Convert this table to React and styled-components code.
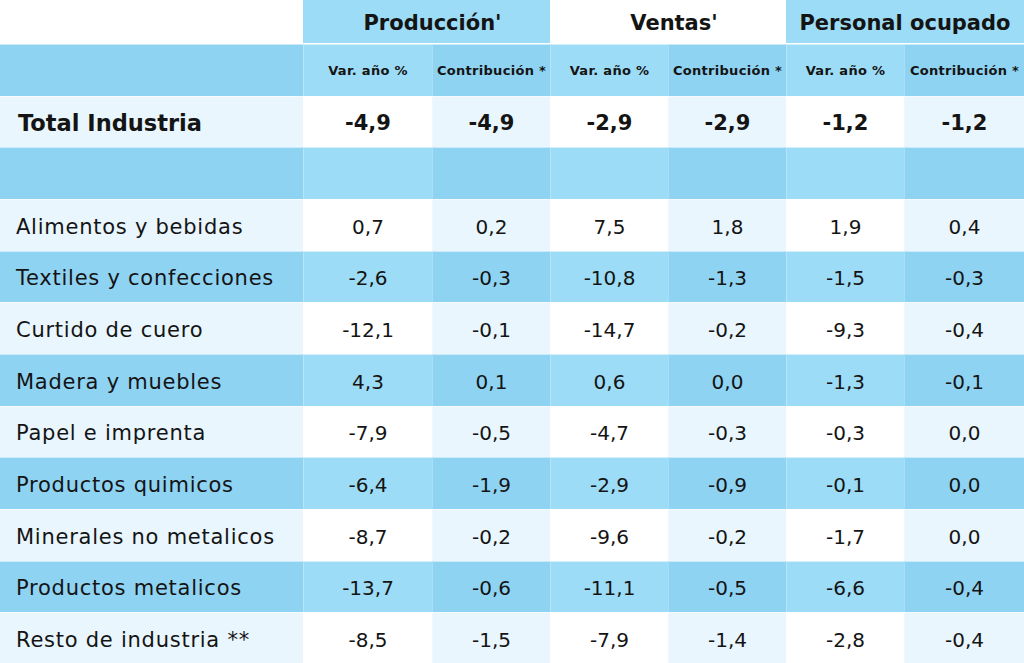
import React from "react";
import styled, { createGlobalStyle } from "styled-components";

const GlobalStyle = createGlobalStyle`
  html, body {
    margin: 0;
    padding: 0;
    background: #ffffff;
  }
  body {
    font-family: "DejaVu Sans", "Liberation Sans", sans-serif;
    color: #141414;
  }
`;

const rows = [
  ["Alimentos y bebidas", "0,7", "0,2", "7,5", "1,8", "1,9", "0,4"],
  ["Textiles y confecciones", "-2,6", "-0,3", "-10,8", "-1,3", "-1,5", "-0,3"],
  ["Curtido de cuero", "-12,1", "-0,1", "-14,7", "-0,2", "-9,3", "-0,4"],
  ["Madera y muebles", "4,3", "0,1", "0,6", "0,0", "-1,3", "-0,1"],
  ["Papel e imprenta", "-7,9", "-0,5", "-4,7", "-0,3", "-0,3", "0,0"],
  ["Productos quimicos", "-6,4", "-1,9", "-2,9", "-0,9", "-0,1", "0,0"],
  ["Minerales no metalicos", "-8,7", "-0,2", "-9,6", "-0,2", "-1,7", "0,0"],
  ["Productos metalicos", "-13,7", "-0,6", "-11,1", "-0,5", "-6,6", "-0,4"],
  ["Resto de industria **", "-8,5", "-1,5", "-7,9", "-1,4", "-2,8", "-0,4"],
];

const palette = {
  dark: { label: "#8fd3f3", var: "#9ddcf6", contrib: "#8fd3f3" },
  light: { label: "#e9f6fd", var: "#ffffff", contrib: "#e9f6fd" },
};

const Table = styled.div`
  display: grid;
  grid-template-columns: 303px 129px 118px 118px 118px 118px 120px;
  grid-template-rows: 44px repeat(12, 51.67px);
  width: 1024px;
  height: 663px;
  overflow: hidden;
`;

const Group = styled.div`
  grid-column: span ${(p) => p.$span || 1};
  background: ${(p) => (p.$filled ? "#9ddcf6" : "#ffffff")};
  border-bottom: 1px solid #ffffff;
  display: flex;
  align-items: center;
  justify-content: center;
  font-weight: bold;
  font-size: 21px;
  padding-top: 2px;
  padding-left: ${(p) => p.$nudge || 0}px;
`;

const Cell = styled.div`
  background: ${(p) => palette[p.$tone][p.$kind]};
  border-top: 1px solid rgba(255, 255, 255, 0.55);
  border-left: ${(p) => (p.$kind === "label" ? "none" : "1px solid rgba(255,255,255,0.25)")};
  display: flex;
  align-items: center;
  justify-content: ${(p) => (p.$kind === "label" ? "flex-start" : "center")};
  padding-left: ${(p) => (p.$kind === "label" ? "16px" : "0")};
  padding-top: 3px;
  font-size: ${(p) => (p.$kind === "label" ? "21px" : "20px")};
  letter-spacing: ${(p) => (p.$kind === "label" ? "0.75px" : "0")};
  white-space: nowrap;
`;

const SubHead = styled(Cell)`
  font-size: 13px;
  font-weight: bold;
  letter-spacing: 0.3px;
  padding-top: 0;
`;

const TotalCell = styled(Cell)`
  font-weight: bold;
  font-size: ${(p) => (p.$kind === "label" ? "22.5px" : "21px")};
  letter-spacing: 0;
  padding-left: ${(p) => (p.$kind === "label" ? "18px" : "0")};
`;

const kindOf = (i) => (i === 0 ? "label" : i % 2 === 1 ? "var" : "contrib");

const App = () => {
  const subHeads = ["", "Var. año %", "Contribución *", "Var. año %", "Contribución *", "Var. año %", "Contribución *"];
  const total = ["Total Industria", "-4,9", "-4,9", "-2,9", "-2,9", "-1,2", "-1,2"];

  return (
    <>
      <GlobalStyle />
      <Table>
        <Group />
        <Group $span={2} $filled $nudge={12}>Producción'</Group>
        <Group $span={2} $nudge={12}>Ventas'</Group>
        <Group $span={2} $filled>Personal ocupado</Group>

        {subHeads.map((t, i) => (
          <SubHead key={"s" + i} $tone="dark" $kind={kindOf(i)}>{t}</SubHead>
        ))}

        {total.map((t, i) => (
          <TotalCell key={"t" + i} $tone="light" $kind={kindOf(i)}>{t}</TotalCell>
        ))}

        {subHeads.map((_, i) => (
          <Cell key={"b" + i} $tone="dark" $kind={kindOf(i)} />
        ))}

        {rows.map((row, r) =>
          row.map((t, i) => (
            <Cell key={r + "-" + i} $tone={r % 2 === 0 ? "light" : "dark"} $kind={kindOf(i)}>
              {t}
            </Cell>
          ))
        )}
      </Table>
    </>
  );
};

export default App;
